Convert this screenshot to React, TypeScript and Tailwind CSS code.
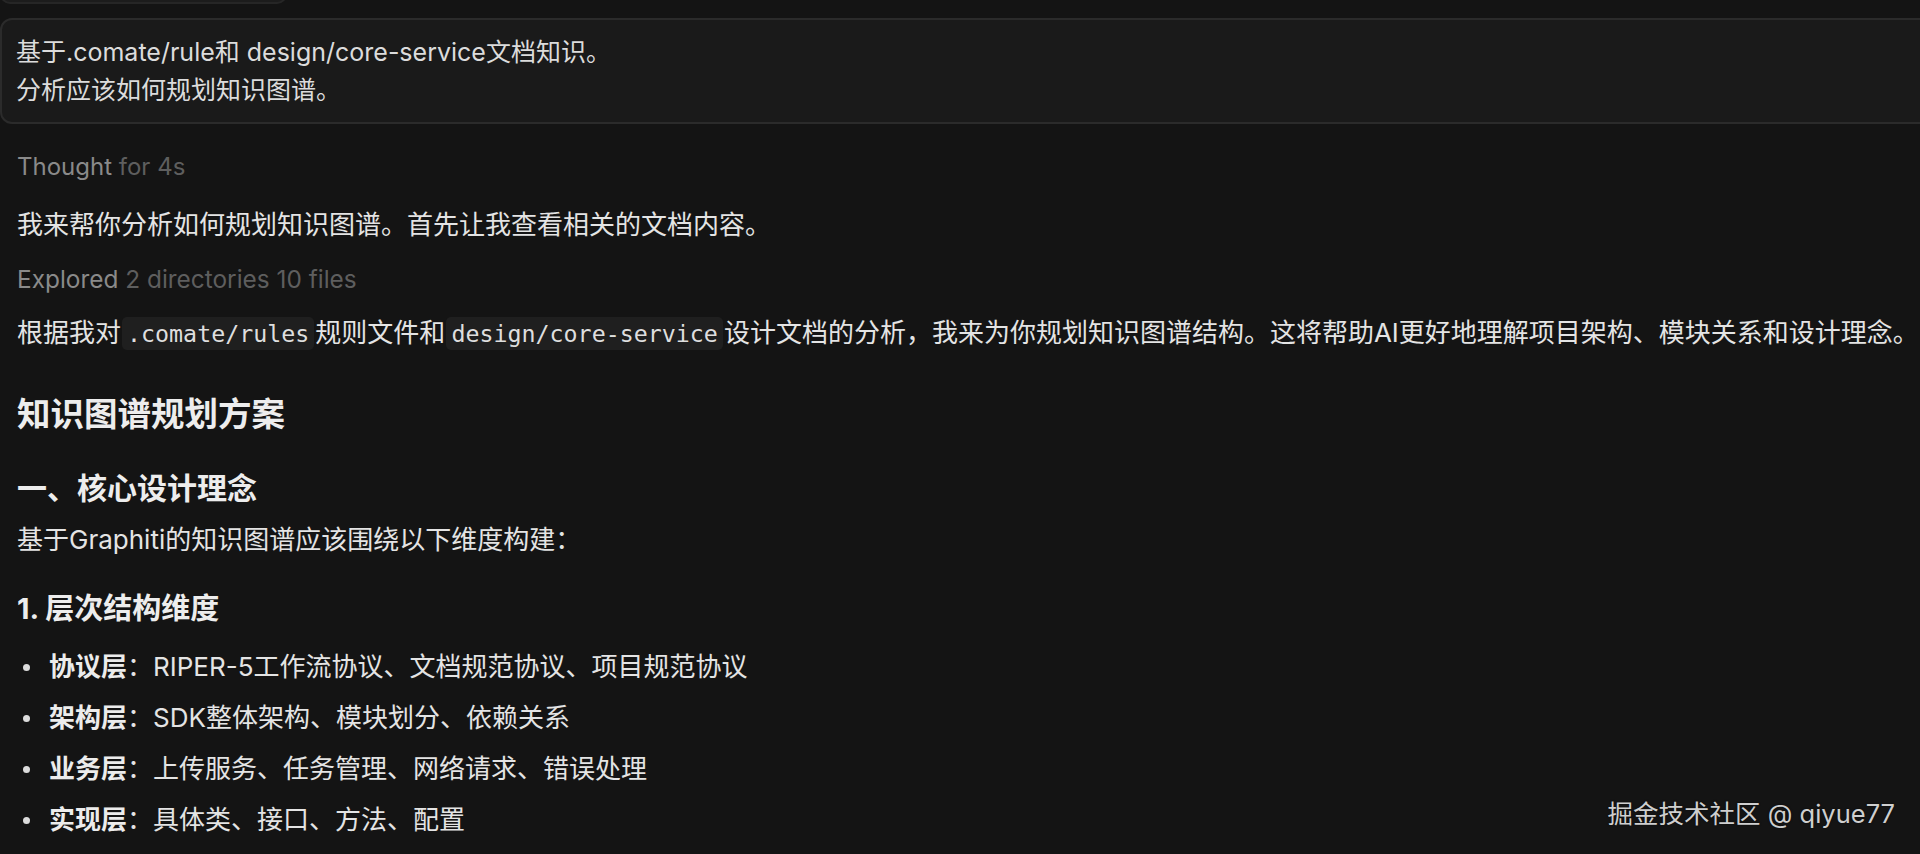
import React from "react";

const sans = "font-['Inter','Noto_Sans_CJK_SC',sans-serif]";

function Code({ children }: { children: React.ReactNode }) {
  return (
    <code className="font-['DejaVu_Sans_Mono','Liberation_Mono',monospace] text-[23.3px] bg-[#1f1f1f] rounded-[5px] px-[5px] py-[3px] mx-[1px] text-[#dedede]">
      {children}
    </code>
  );
}

function Bullet({ label, text }: { label: string; text: string }) {
  return (
    <div className="flex items-center leading-[36px] text-[26px] text-[#e4e4e4] mt-[15px] first:mt-0">
      <span className="w-[32px] flex justify-start pl-[6px]">
        <span className="block w-[7px] h-[7px] rounded-full bg-[#dcdcdc]" />
      </span>
      <span className="whitespace-nowrap">
        <span className="font-bold text-[#ececec]">{label}</span>：{text}
      </span>
    </div>
  );
}

export default function App() {
  return (
    <div className={`relative w-[1920px] h-[854px] overflow-hidden bg-[#141414] ${sans}`}>
      {/* previous message box, mostly scrolled out */}
      <div className="w-[287px] h-[40px] mt-[-36px] rounded-[10px] border-2 border-[#262626] bg-[#1c1c1c]" />

      {/* user prompt box */}
      <div className="mt-[14px] w-[1960px] rounded-[12px] border-2 border-[#2b2b2b] bg-[#1a1a1a] pl-[14px] py-[13px] text-[25px] leading-[38px] text-[#dcdcdc]">
        <div className="whitespace-nowrap">基于.comate/rule和 design/core-service文档知识。</div>
        <div className="whitespace-nowrap">分析应该如何规划知识图谱。</div>
      </div>

      <div className="pl-[17px] flex flex-col">
        <div className="mt-[25px] text-[24px] leading-[36px] whitespace-nowrap">
          <span className="text-[#8a8a8a]">Thought</span>{" "}
          <span className="text-[#5e5e5e]">for 4s</span>
        </div>

        <div className="mt-[22px] text-[26px] leading-[36px] text-[#e4e4e4] whitespace-nowrap">
          我来帮你分析如何规划知识图谱。首先让我查看相关的文档内容。
        </div>

        <div className="mt-[18px] text-[24.4px] leading-[36px] whitespace-nowrap">
          <span className="text-[#8a8a8a]">Explored</span>{" "}
          <span className="text-[#5e5e5e]">2 directories 10 files</span>
        </div>

        <div className="mt-[18px] text-[26px] leading-[36px] text-[#e4e4e4] whitespace-nowrap">
          根据我对<Code>.comate/rules</Code>规则文件和<Code>design/core-service</Code>设计文档的分析，我来为你规划知识图谱结构。这将帮助AI更好地理解项目架构、模块关系和设计理念。
        </div>

        <h2 className="mt-[40px] text-[33.5px] leading-[44px] font-bold text-[#ededed] whitespace-nowrap">
          知识图谱规划方案
        </h2>

        <h3 className="mt-[32px] text-[30px] leading-[40px] font-bold text-[#ededed] whitespace-nowrap">
          一、核心设计理念
        </h3>

        <p className="mt-[14px] text-[26px] leading-[36px] text-[#e4e4e4] whitespace-nowrap">
          基于Graphiti的知识图谱应该围绕以下维度构建：
        </p>

        <h4 className="mt-[33px] text-[29px] leading-[36px] font-bold text-[#ededed] whitespace-nowrap">
          1. 层次结构维度
        </h4>

        <div className="mt-[22px] flex flex-col">
          <Bullet label="协议层" text="RIPER-5工作流协议、文档规范协议、项目规范协议" />
          <Bullet label="架构层" text="SDK整体架构、模块划分、依赖关系" />
          <Bullet label="业务层" text="上传服务、任务管理、网络请求、错误处理" />
          <Bullet label="实现层" text="具体类、接口、方法、配置" />
        </div>
      </div>

      {/* watermark overlay */}
      <div className="absolute right-[25px] top-[797px] text-[25.5px] leading-[34px] text-[#cfcfcf] whitespace-nowrap [text-shadow:0_0_2px_rgba(0,0,0,0.6)]">
        掘金技术社区 @ qiyue77
      </div>
    </div>
  );
}
